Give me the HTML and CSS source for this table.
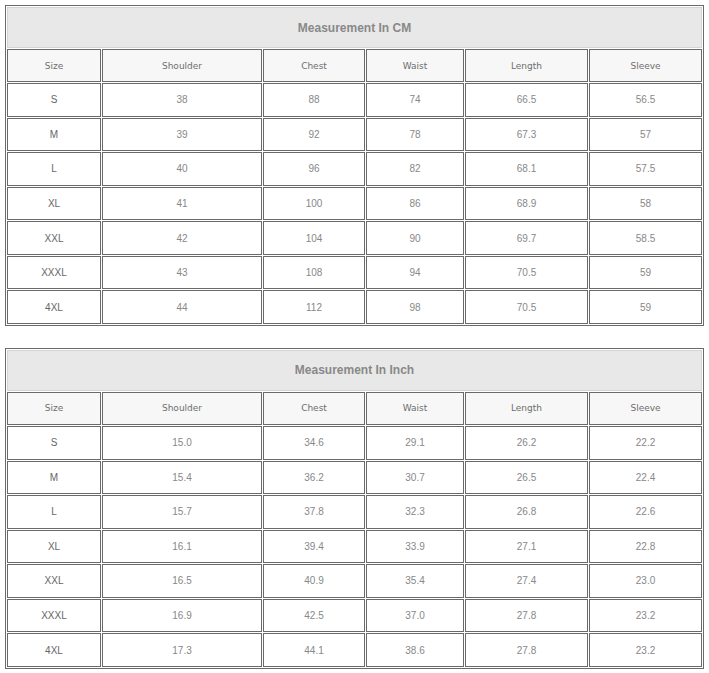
FILE: index.html
```html
<!DOCTYPE html>
<html>
<head>
<meta charset="utf-8">
<link rel="stylesheet" href="styles.css">
</head>
<body>
<div class="page">
<table class="size-table">
  <colgroup><col class="c1"><col class="c2"><col class="c3"><col class="c4"><col class="c5"><col class="c6"></colgroup>
  <tr class="title-row"><td colspan="6">Measurement In CM</td></tr>
  <tr class="head-row">
    <td>Size</td><td>Shoulder</td><td>Chest</td><td>Waist</td><td>Length</td><td>Sleeve</td>
  </tr>
  <tr><td class="size">S</td><td>38</td><td>88</td><td>74</td><td>66.5</td><td>56.5</td></tr>
  <tr><td class="size">M</td><td>39</td><td>92</td><td>78</td><td>67.3</td><td>57</td></tr>
  <tr><td class="size">L</td><td>40</td><td>96</td><td>82</td><td>68.1</td><td>57.5</td></tr>
  <tr><td class="size">XL</td><td>41</td><td>100</td><td>86</td><td>68.9</td><td>58</td></tr>
  <tr><td class="size">XXL</td><td>42</td><td>104</td><td>90</td><td>69.7</td><td>58.5</td></tr>
  <tr><td class="size">XXXL</td><td>43</td><td>108</td><td>94</td><td>70.5</td><td>59</td></tr>
  <tr><td class="size">4XL</td><td>44</td><td>112</td><td>98</td><td>70.5</td><td>59</td></tr>
</table>

<table class="size-table">
  <colgroup><col class="c1"><col class="c2"><col class="c3"><col class="c4"><col class="c5"><col class="c6"></colgroup>
  <tr class="title-row"><td colspan="6">Measurement In Inch</td></tr>
  <tr class="head-row">
    <td>Size</td><td>Shoulder</td><td>Chest</td><td>Waist</td><td>Length</td><td>Sleeve</td>
  </tr>
  <tr><td class="size">S</td><td>15.0</td><td>34.6</td><td>29.1</td><td>26.2</td><td>22.2</td></tr>
  <tr><td class="size">M</td><td>15.4</td><td>36.2</td><td>30.7</td><td>26.5</td><td>22.4</td></tr>
  <tr><td class="size">L</td><td>15.7</td><td>37.8</td><td>32.3</td><td>26.8</td><td>22.6</td></tr>
  <tr><td class="size">XL</td><td>16.1</td><td>39.4</td><td>33.9</td><td>27.1</td><td>22.8</td></tr>
  <tr><td class="size">XXL</td><td>16.5</td><td>40.9</td><td>35.4</td><td>27.4</td><td>23.0</td></tr>
  <tr><td class="size">XXXL</td><td>16.9</td><td>42.5</td><td>37.0</td><td>27.8</td><td>23.2</td></tr>
  <tr><td class="size">4XL</td><td>17.3</td><td>44.1</td><td>38.6</td><td>27.8</td><td>23.2</td></tr>
</table>
</div>
</body>
</html>
```

FILE: styles.css
```css
html, body {
  margin: 0;
  padding: 0;
  background: #ffffff;
}
.page {
  padding: 5px 0 0 5px;
  display: flex;
  flex-direction: column;
  gap: 22px;
}
.size-table {
  width: 699px;
  table-layout: fixed;
  border-collapse: separate;
  border-spacing: 1px;
  border: 1px solid #6a6a6a;
  font-family: "Liberation Sans", Arial, sans-serif;
  font-size: 10px;
  color: #888888;
}
.size-table td {
  box-sizing: border-box;
  border: 1px solid #6a6a6a;
  padding: 0;
  height: 33.57px;
  text-align: center;
  vertical-align: middle;
  background: #ffffff;
}
.size-table td.size {
  color: #666666;
}
.size-table .title-row td {
  height: 41px;
  background: #e8e8e8;
  border-color: #d4d4d4;
  font-weight: bold;
  font-size: 12px;
  color: #888888;
}
.size-table .head-row td {
  height: 33px;
  background: #f7f7f7;
  font-family: "DejaVu Sans", Verdana, sans-serif;
  font-size: 9px;
  color: #6e6e6e;
}
.c1 { width: 94px; }
.c2 { width: 160px; }
.c3 { width: 102px; }
.c4 { width: 98px; }
.c5 { width: 123px; }
.c6 { width: 113px; }
```
